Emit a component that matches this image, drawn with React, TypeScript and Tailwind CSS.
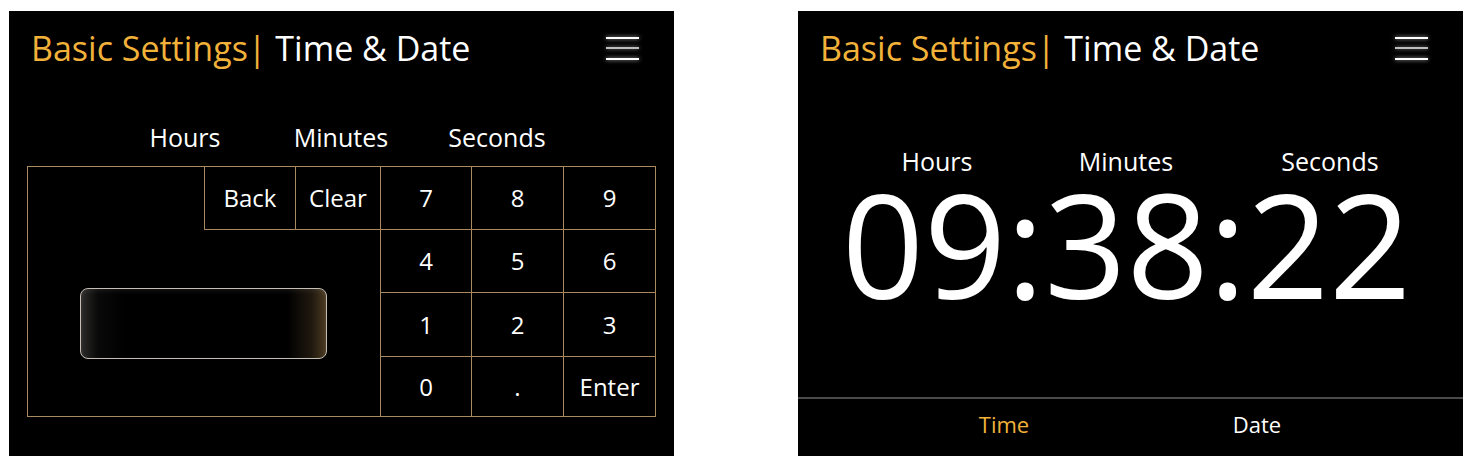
import React from "react";

const Header = () => (
  <div className="flex h-[74px] items-center justify-between pl-[22px] pr-[35px]">
    <div className="text-[34px] font-normal leading-normal whitespace-nowrap">
      <span className="text-[#f2b23a]">Basic Settings|</span>
      <span className="text-white"> Time &amp; Date</span>
    </div>
    <div className="flex w-[33px] flex-col gap-[8.5px]">
      <div className="h-[2px] w-full bg-white shadow-[0_0_4px_rgba(255,255,255,0.7)]" />
      <div className="h-[2px] w-full bg-[#bdbdbd] shadow-[0_0_4px_rgba(255,255,255,0.5)]" />
      <div className="h-[2px] w-full bg-white shadow-[0_0_4px_rgba(255,255,255,0.7)]" />
    </div>
  </div>
);

const Cell = ({ label, cls }: { label: string; cls: string }) => (
  <div className={"flex items-center justify-center border-[#a98a5f] text-[24px] font-normal text-white " + cls}>
    {label}
  </div>
);

const LeftPanel = () => (
  <div className="flex h-[445px] w-[665px] flex-col bg-black">
    <Header />
    <div className="mt-[36px] flex pl-[98px] text-[25px] font-normal leading-[32px] text-white">
      <div className="w-[156px] text-center">Hours</div>
      <div className="w-[156px] text-center">Minutes</div>
      <div className="w-[156px] text-center">Seconds</div>
    </div>
    <div className="mt-[13px] ml-[18px] flex h-[251px] w-[629px] border border-[#a98a5f]">
      <div className="flex w-[352px] flex-col">
        <div className="flex h-[63px]">
          <div className="flex-1" />
          <Cell label="Back" cls="w-[91px] border-l border-b" />
          <Cell label="Clear" cls="w-[85px] border-l border-b" />
        </div>
        <div className="flex flex-1 items-center justify-center pr-[2px]">
          <div className="h-[71px] w-[247px] rounded-[8px] border border-[#c4beb4] bg-[linear-gradient(to_right,#2c2b2a_0%,#090909_7%,#000_18%,#000_84%,#1f180f_94%,#4a3920_100%)] shadow-[inset_0_2px_5px_rgba(255,255,255,0.08)]" />
        </div>
      </div>
      <div className="grid flex-1 grid-cols-[91px_92px_92px] grid-rows-[62px_63px_64px_60px]">
        <Cell label="7" cls="border-l" />
        <Cell label="8" cls="border-l" />
        <Cell label="9" cls="border-l" />
        <Cell label="4" cls="border-l border-t" />
        <Cell label="5" cls="border-l border-t" />
        <Cell label="6" cls="border-l border-t" />
        <Cell label="1" cls="border-l border-t" />
        <Cell label="2" cls="border-l border-t" />
        <Cell label="3" cls="border-l border-t" />
        <Cell label="0" cls="border-l border-t" />
        <Cell label="." cls="border-l border-t" />
        <Cell label="Enter" cls="border-l border-t" />
      </div>
    </div>
  </div>
);

const RightPanel = () => (
  <div className="flex h-[445px] w-[665px] flex-col bg-black">
    <Header />
    <div className="mt-[61px] flex pl-[44px] text-[25px] font-normal leading-[30px] text-white">
      <div className="w-[190px] text-center">Hours</div>
      <div className="w-[188px] text-center">Minutes</div>
      <div className="w-[220px] text-center">Seconds</div>
    </div>
    <div className="mt-[12px] h-[110px] pr-[8px] text-center text-[144px] font-medium leading-[110px] text-white">
      09:38:22
    </div>
    <div className="flex-1" />
    <div className="h-[2px] w-full bg-[#4a4a4a]" />
    <div className="flex h-[57px] items-center justify-center pb-[7px] text-[22px] font-normal">
      <div className="w-[253px] text-center text-[#f2b23a]">Time</div>
      <div className="w-[253px] text-center text-white">Date</div>
    </div>
  </div>
);

export default function App() {
  return (
    <div className="flex h-[465px] w-[1473px] bg-white pl-[9px] pt-[11px] font-['Open_Sans',sans-serif]">
      <LeftPanel />
      <div className="w-[124px]" />
      <RightPanel />
    </div>
  );
}
